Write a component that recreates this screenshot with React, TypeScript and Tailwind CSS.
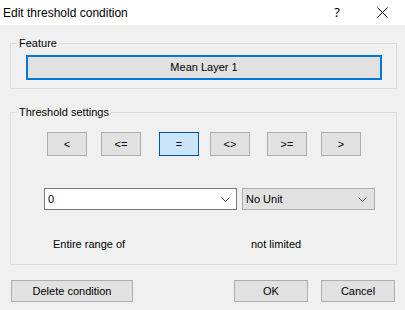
import React from "react";

const Chevron = () => (
  <svg width="9" height="5" viewBox="0 0 9 5" className="text-[#606060]">
    <path d="M0.5 0.5 L4.5 4.5 L8.5 0.5" fill="none" stroke="currentColor" strokeWidth="1" />
  </svg>
);

const OpButton = ({ label, active, className }: { label: string; active?: boolean; className?: string }) => (
  <button
    className={
      "w-[40px] h-[24px] border flex items-center justify-center text-[11px] text-black " +
      (active ? "bg-[#cce4f7] border-[#005499] " : "bg-[#e1e1e1] border-[#adadad] ") +
      (className ?? "")
    }
  >
    {label}
  </button>
);

export default function App() {
  return (
    <div
      className="w-[405px] h-[310px] bg-[#f0f0f0] flex flex-col text-black"
      style={{ fontFamily: '"Liberation Sans", Arial, sans-serif' }}
    >
      {/* title bar */}
      <div className="h-[25px] bg-white flex items-center shrink-0">
        <span className="ml-[3px] text-[12px]">Edit threshold condition</span>
        <span className="ml-auto text-[13px] mr-[37px]" style={{ fontFamily: '"Noto Sans", sans-serif' }}>
          ?
        </span>
        <svg width="11" height="11" viewBox="0 0 11 11" className="mr-[17px]">
          <path d="M0.5 0.5 L10.5 10.5 M10.5 0.5 L0.5 10.5" stroke="#000" strokeWidth="1" />
        </svg>
      </div>

      <div className="pl-[10px] pt-[11px] text-[11px]">
        <fieldset className="w-[387px] border border-[#dcdcdc] pb-[8px]">
          <legend className="ml-[6px] px-[2px] leading-[14px]">Feature</legend>
          <button className="mt-[5px] ml-[15px] w-[356px] h-[25px] border-2 border-[#0078d7] bg-[#e1e1e1] text-[11px] flex items-center justify-center">
            Mean Layer 1
          </button>
        </fieldset>

        <fieldset className="mt-[16px] w-[387px] border border-[#dcdcdc] pb-[13px]">
          <legend className="ml-[6px] px-[2px] leading-[14px]">Threshold settings</legend>
          <div className="mt-[13px] ml-[36px] flex">
            <OpButton label="<" />
            <OpButton label="<=" className="ml-[14px]" />
            <OpButton label="=" active className="ml-[18px]" />
            <OpButton label="<>" className="ml-[11px]" />
            <OpButton label=">=" className="ml-[17px]" />
            <OpButton label=">" className="ml-[14px]" />
          </div>

          <div className="mt-[32px] ml-[33px] flex">
            <div className="w-[193px] h-[22px] bg-white border border-[#7a7a7a] flex items-center pl-[3px] pr-[6px]">
              <span>0</span>
              <span className="ml-auto">
                <Chevron />
              </span>
            </div>
            <div className="ml-[5px] w-[133px] h-[22px] bg-[#e1e1e1] border border-[#adadad] flex items-center pl-[3px] pr-[7px]">
              <span>No Unit</span>
              <span className="ml-auto">
                <Chevron />
              </span>
            </div>
          </div>

          <div className="mt-[28px] flex leading-[13px]">
            <span className="ml-[42px] w-[198px]">Entire range of</span>
            <span>not limited</span>
          </div>
        </fieldset>

        <div className="mt-[15px] ml-[1px] flex">
          <button className="w-[122px] h-[22px] border border-[#adadad] bg-[#e1e1e1] text-[11px]">Delete condition</button>
          <button className="ml-[101px] w-[74px] h-[22px] border border-[#adadad] bg-[#e1e1e1] text-[11px]">OK</button>
          <button className="ml-[13px] w-[74px] h-[22px] border border-[#adadad] bg-[#e1e1e1] text-[11px]">Cancel</button>
        </div>
      </div>
    </div>
  );
}
